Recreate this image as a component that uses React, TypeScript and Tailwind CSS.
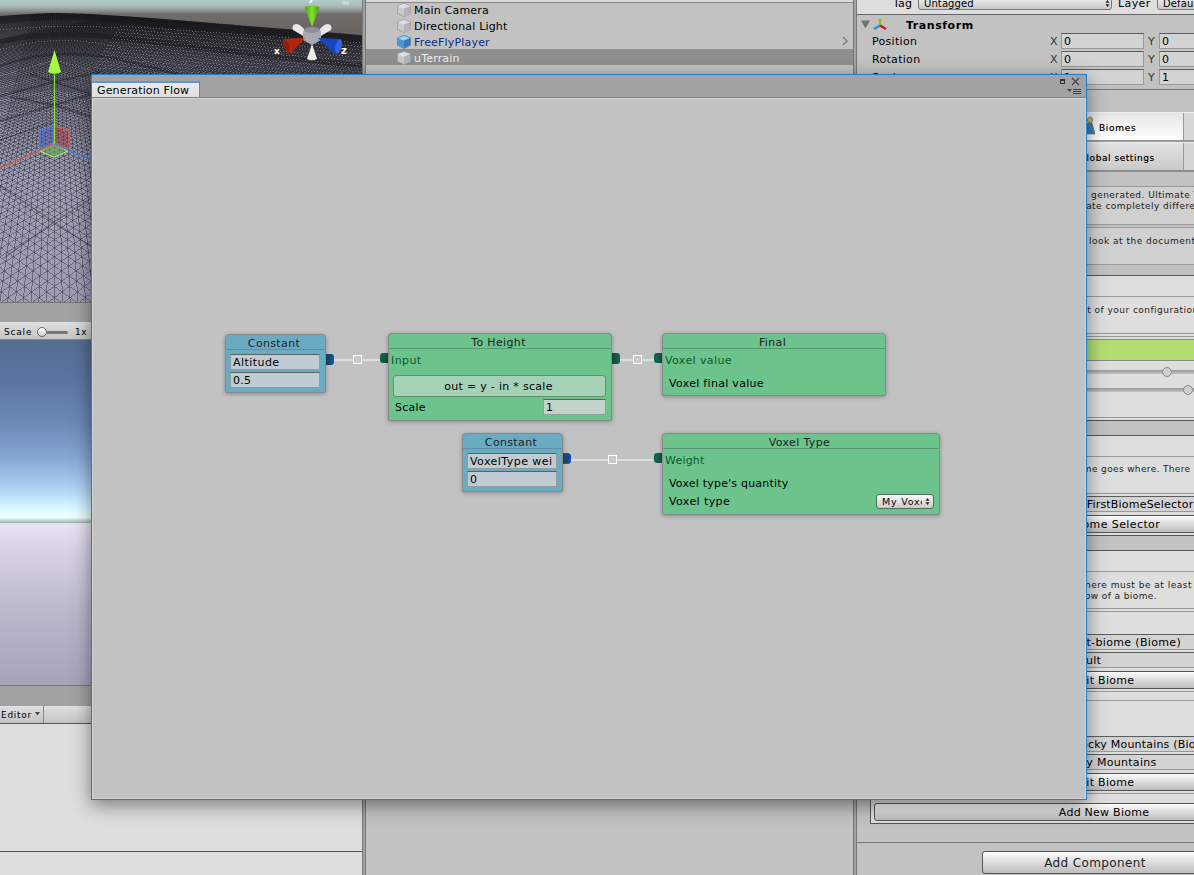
import React from "react";

const range = (a: number, b: number) => Array.from({ length: b - a + 1 }, (_, i) => a + i);

/* Straight mesh edges fanning out from a vanishing point above the view. */
function fan(vx: number, slope: number, from: number, to: number) {
  const horizon = -70;
  return range(from, to)
    .map((n) => {
      const x1 = vx + slope * n * (0 - horizon);
      const x2 = vx + slope * n * (304 - horizon);
      return `M${x1.toFixed(1)} 0L${x2.toFixed(1)} 304`;
    })
    .join("");
}

/* Rows of lit ridge facets that follow the fall of the hills to the right. */
const facets = range(0, 13)
  .map((i) => `M${120 - i * 2} ${26 + i * 3.2}L362 ${43 + i * 3.6}`)
  .join("");

function SceneView() {
  const edges = fan(54.5, 0.021, -12, 160) + fan(-439.5, 0.042, 18, 180) + fan(548.5, 0.042, -120, -1);
  return (
    <svg width="362" height="302" viewBox="0 0 362 302" className="block shrink-0">
      <defs>
        <linearGradient id="haze" x1="0" y1="0" x2="0" y2="1">
          <stop offset="0" stopColor="#b5cccc" />
          <stop offset="0.2" stopColor="#a8b8b8" />
          <stop offset="0.42" stopColor="#6f6c6a" />
          <stop offset="1" stopColor="#6a6360" />
        </linearGradient>
        <linearGradient id="depth" x1="0" y1="12" x2="0" y2="180" gradientUnits="userSpaceOnUse">
          <stop offset="0" stopColor="#0c0c0e" stopOpacity="0.72" />
          <stop offset="0.3" stopColor="#18181c" stopOpacity="0.34" />
          <stop offset="0.65" stopColor="#1a1a1e" stopOpacity="0.14" />
          <stop offset="1" stopColor="#222228" stopOpacity="0" />
        </linearGradient>
        <linearGradient id="coneY" x1="0" y1="0" x2="1" y2="0">
          <stop offset="0" stopColor="#4a9c10" />
          <stop offset="0.5" stopColor="#83e02c" />
          <stop offset="1" stopColor="#4c9413" />
        </linearGradient>
        <clipPath id="ground">
          <path d="M0 16L30 14L55 13L90 14L150 18L200 22L260 27L310 31L362 35V302H0Z" />
        </clipPath>
      </defs>
      <rect width="362" height="34" fill="url(#haze)" />
      <rect y="30" width="362" height="20" fill="#6a6360" />
      <g clipPath="url(#ground)">
        <rect width="362" height="302" fill="#9d9db5" />
        <path d={edges} stroke="#25252c" strokeWidth="0.7" strokeOpacity="0.6" fill="none" shapeRendering="crispEdges" />
        <rect width="362" height="180" fill="url(#depth)" />
        <g fill="none" stroke="#101014" strokeOpacity="0.35" strokeWidth="2">
          <path d="M0 20Q60 12 130 20T362 40" strokeWidth="8" />
          <path d="M0 42Q50 30 120 38T250 54L362 66" strokeWidth="5" />
          <path d="M0 66Q60 44 130 62T200 80" strokeWidth="2.500" />
          <path d="M0 96L54 82L100 72M30 74L100 97M0 121L54 105L100 92M10 97L54 105L92 117" />
          <path d="M0 186L54 222L92 247M92 198L54 222L4 258M0 140L54 122" strokeWidth="1.200" />
        </g>
        <g stroke="#b4b4c6" strokeOpacity="0.45" fill="none" strokeDasharray="1 2" shapeRendering="crispEdges">
          <path d={facets} />
          <path d="M0 30Q55 24 120 28M0 50Q60 32 120 48M0 76L54 60L92 70M0 88L54 73L92 80M0 101L54 90L92 104M0 108L54 97L92 110M0 114L54 112L92 124" />
        </g>
      </g>
      <path d="M40 131L54 126V144L40 149Z" fill="#3c5ad0" fillOpacity="0.4" stroke="#4a7ce6" />
      <path d="M54 126L69 131V149L54 144Z" fill="#b03038" fillOpacity="0.4" stroke="#ea5a48" />
      <path d="M54 144L68 151L54 157L40 151Z" fill="#6fb34e" fillOpacity="0.55" stroke="#a5f27b" />
      <path d="M54 144L0 168" stroke="#db5a3c" strokeWidth="1.300" />
      <path d="M54 144L92 160" stroke="#3f82e8" strokeWidth="1.300" />
      <path d="M54.500 72V144" stroke="#8fe03a" />
      <path d="M54.500 50L48 72Q54.500 75 61 72Z" fill="#a6fb43" />
      <g>
        <path d="M305 37L293 30Q291 25 296 24Q301 24 307 33ZM319 37L331 30Q333 25 328 24Q323 24 317 33Z" fill="#e8e8e8" />
        <path d="M303 31L312 27L321 31V40L312 45L303 40Z" fill="#a9aab1" />
        <ellipse cx="312" cy="30" rx="8" ry="3" fill="#8d909b" />
        <path d="M312 27L304.500 7Q312 4 319.500 7Z" fill="url(#coneY)" />
        <path d="M312 44L307 59Q312 61.500 317 59Z" fill="#ededed" />
        <path d="M305 38L284 39Q281 45 288 53L291 53Z" fill="#b5240f" />
        <path d="M284 40Q291 43 289 53Q282 50 284 40Z" fill="#8f1c0c" />
        <path d="M318 38L341 39Q344 46 337 54L333 53Z" fill="#1846bd" />
        <ellipse cx="338.500" cy="46.500" rx="3" ry="7" transform="rotate(15 338.5 46.5)" fill="#2f66e8" />
        <path d="M342 1h7v4h-7z" fill="#c7d3d3" />
      </g>
      <g fill="#fff" fontFamily="DejaVu Sans" fontSize="10" fontWeight="bold">
        <text x="274" y="54" fontSize="9">x</text>
        <text x="341" y="54">z</text>
        <text x="308" y="1">y</text>
      </g>
    </svg>
  );
}

function CubeIcon({ blue }: { blue?: boolean }) {
  return (
    <svg width="14" height="14" viewBox="0 0 14 14" className="mt-0.5 shrink-0">
      <path d="M7 .5L13.500 2.800V10.300L7 13.500L.5 10.300V2.800Z" fill={blue ? "#4b97d5" : "#cbcbcb"} stroke={blue ? "#5286b0" : "#9c9c9c"} strokeWidth="0.8" />
      <path d="M7 1L13 3L7 5.800L1 3Z" fill={blue ? "#9fd3f7" : "#dedede"} />
      <path d="M7 5.800L13 3.200V10L7 13Z" fill={blue ? "#3b78b8" : "#b4b4b4"} />
    </svg>
  );
}

function HierarchyRow({ name, className = "", blue, arrow }: { name: string; className?: string; blue?: boolean; arrow?: boolean }) {
  return (
    <div className={`flex h-4 shrink-0 items-center gap-[3px] pl-[31px] pr-1 ${className}`}>
      <CubeIcon blue={blue} />
      <span className="grow pt-1 tracking-[0.18px]">{name}</span>
      {arrow && (
        <svg width="8" height="10" viewBox="0 0 8 10">
          <path d="M2 1L6 5L2 9" fill="none" stroke="#777" strokeWidth="1.300" />
        </svg>
      )}
    </div>
  );
}

function UpDown() {
  return (
    <svg width="5" height="7" viewBox="0 0 5 7" className="shrink-0">
      <path d="M2.500 0L4.500 2.800H.5ZM2.500 7L4.500 4.200H.5Z" fill="#222" />
    </svg>
  );
}

function Field({ children, className = "" }: { children: React.ReactNode; className?: string }) {
  return (
    <div className={`flex h-4 shrink-0 items-center overflow-hidden whitespace-nowrap border border-[#999] border-t-[#5c5c5c] bg-[#d3d3d3] pt-px leading-[13px] ${className}`}>
      {children}
    </div>
  );
}

function VectorRow({ label, value }: { label: string; value: string }) {
  return (
    <div className="flex h-[18px] w-[420px] shrink-0 items-start pl-[15px]">
      <span className="w-[178px] shrink-0 pt-0.5 tracking-[0.3px]">{label}</span>
      <span className="w-[11px] shrink-0 pt-0.5 text-[#333]">X</span>
      <Field className="w-[83px] pl-0.5">{value}</Field>
      <span className="w-[15px] shrink-0 pl-1 pt-0.5 text-[#333]">Y</span>
      <Field className="w-[83px] pl-0.5">{value}</Field>
    </div>
  );
}

function WideButton({ children, className = "" }: { children: React.ReactNode; className?: string }) {
  return (
    <div className={`flex h-[18px] shrink-0 items-center whitespace-nowrap rounded-[3px] border border-[#555] bg-gradient-to-b from-[#fcfcfc] to-[#bdbdbd] pt-0.5 ${className}`}>
      {children}
    </div>
  );
}

function Inspector() {
  return (
    <div className="flex w-[337px] shrink-0 flex-col overflow-hidden bg-[#c2c2c2]">
      <div className="flex h-[15px] w-[420px] shrink-0 items-start border-b border-[#666] bg-[#dedede] pl-9">
        <span className="-mt-[3px] w-[25px] shrink-0 tracking-[0.2px]">Tag</span>
        <div className="-mt-[5px] flex h-[15px] w-[194px] shrink-0 items-center rounded-[3px] border border-[#777] bg-gradient-to-b from-[#f5f5f5] to-[#c8c8c8] pl-[5px] pr-px pt-0.5 text-[10px]">
          <span className="grow tracking-[0.1px]">Untagged</span>
          <UpDown />
        </div>
        <span className="-mt-[3px] w-[45px] shrink-0 pl-1.5 tracking-[0.4px]">Layer</span>
        <div className="-mt-[5px] flex h-[15px] w-[80px] shrink-0 items-center rounded-[3px] border border-[#777] bg-gradient-to-b from-[#f5f5f5] to-[#c8c8c8] pl-[5px] pt-0.5 text-[10px] tracking-[0.1px]">Default</div>
      </div>
      <div className="flex h-[18px] shrink-0 items-center pl-1 pt-px">
        <svg width="10" height="9" viewBox="0 0 10 9">
          <path d="M0 .5H9L4.500 8.500Z" fill="#717171" />
        </svg>
        <svg width="15" height="14" viewBox="0 0 15 14" className="ml-px">
          <g fill="none" strokeWidth="2.400">
            <path d="M8 7.500V1" stroke="#7ec413" />
            <path d="M8 7.500L2 11" stroke="#2a90cc" />
            <path d="M8 7.500L14 11" stroke="#d41417" />
          </g>
        </svg>
        <span className="ml-[19px] pt-[3px] font-bold tracking-[0.55px]">Transform</span>
      </div>
      <VectorRow label="Position" value="0" />
      <VectorRow label="Rotation" value="0" />
      <VectorRow label="Scale" value="1" />
      <div className="h-[3px] shrink-0 border-b border-[#777]" />
      <div className="h-[22px] shrink-0" />

      <div className="flex h-[30px] shrink-0 border-b-2 border-t border-b-[#999] border-t-[#eee] text-[9px]">
        <div className="flex w-[327px] items-center gap-[4px] border-r border-[#999] bg-gradient-to-b from-[#e6e6e6] to-white pl-[224px]">
          <svg width="14" height="20" viewBox="0 0 14 20" className="-mt-0.5 shrink-0">
            <path d="M6 7H11L14 18H5Z" fill="#3f7ca8" stroke="#777" strokeWidth="0.800" />
            <circle cx="9" cy="4" r="2.800" fill="#cdb44e" stroke="#777" strokeWidth="0.800" />
          </svg>
          <span className="pt-0.5 tracking-[0.7px] [text-shadow:0_0_0.5px_#0008]">Biomes</span>
        </div>
        <div className="grow bg-[#d8d8d8]" />
      </div>
      <div className="flex h-[30px] shrink-0 border-b-2 border-t border-b-[#8d8d8d] border-t-[#eee] text-[9px]">
        <div className="flex w-[327px] items-center border-r border-[#999] bg-gradient-to-b from-[#e2e2e2] to-[#cacaca] pl-[222px]">
          <span className="whitespace-nowrap pt-0.5 tracking-[0.55px] [text-shadow:0_0_0.5px_#0008]">Global settings</span>
        </div>
        <div className="grow bg-[#d6d6d6]" />
      </div>
      <div className="h-[14px] shrink-0" />

      <div className="flex w-[477px] shrink-0 flex-col text-[9px] leading-[11px] text-[#222]">
        <div className="flex h-[39px] flex-col border-y border-[#999] bg-[#d0d0d0] pl-[234px] pt-[3px] tracking-[0.45px]">
          <span>generated. Ultimate Terrains</span>
          <span className="-ml-[9px]">rate completely different</span>
        </div>
        <div className="mt-0.5 h-[38px] border-y border-[#999] bg-[#d0d0d0] pl-[232px] pt-[8px] tracking-[0.5px]">look at the documentation</div>
      </div>
      <div className="h-2.5 shrink-0" />

      <div className="ml-[13px] flex h-[146px] w-[470px] shrink-0 flex-col border border-[#555] bg-[#dedede]">
        <div className="h-5 shrink-0" />
        <div className="h-[38px] shrink-0 border-y border-[#999] pl-[210px] pt-2 text-[9px] leading-[11px] tracking-[0.47px] text-[#222]">ut of your configuration</div>
        <div className="mt-0.5 h-[82px] shrink-0 border-y border-[#999] pt-[2px]">
          <div className="h-[22px] border-y border-[#888] bg-[#b3dd70]" />
          <div className="flex h-[18px] items-center pt-[3px]">
            <div className="h-1 w-[292px] bg-gradient-to-b from-[#999] to-[#c4c4c4]" />
            <div className="-ml-px size-2.5 shrink-0 rounded-full border border-[#888] bg-[#cfcfcf]" />
            <div className="h-1 grow bg-gradient-to-b from-[#999] to-[#c4c4c4]" />
          </div>
          <div className="flex h-[18px] items-center pt-[3px]">
            <div className="h-1 w-[313px] bg-gradient-to-b from-[#999] to-[#c4c4c4]" />
            <div className="-ml-px size-2.5 shrink-0 rounded-full border border-[#888] bg-[#cfcfcf]" />
            <div className="h-1 grow bg-gradient-to-b from-[#999] to-[#c4c4c4]" />
          </div>
        </div>
      </div>
      <div className="h-3.5 shrink-0" />

      <div className="ml-[13px] flex h-[101px] w-[470px] shrink-0 flex-col border border-[#555] bg-[#dedede]">
        <div className="h-5 shrink-0" />
        <div className="h-[38px] shrink-0 border-y border-[#999] pl-[206px] pt-[7px] text-[9px] leading-[11px] tracking-[0.35px] text-[#222]">ome goes where. There</div>
        <div className="flex flex-col gap-[3px] px-[3px] pt-0.5">
          <Field className="pl-[205px] tracking-[0.2px]">yFirstBiomeSelector (BiomeSelector)</Field>
          <WideButton className="pl-[204px] tracking-[0.4px]">iome Selector</WideButton>
        </div>
      </div>
      <div className="h-3.5 shrink-0" />

      <div className="ml-[13px] flex h-[274px] w-[470px] shrink-0 flex-col border border-[#555] bg-[#dedede]">
        <div className="h-5 shrink-0" />
        <div className="flex h-[38px] shrink-0 flex-col border-y border-[#999] pl-[210px] pt-2 text-[9px] leading-[11px] tracking-[0.4px] text-[#222]">
          <span className="tracking-[0.5px]">there must be at least one</span>
          <span>row of a biome.</span>
        </div>
        <div className="mt-0.5 flex h-[81px] shrink-0 flex-col gap-0.5 border-y border-[#999] px-[3px] pt-[22px]">
          <Field className="pl-[208px] tracking-[0.35px]">lt-biome (Biome)</Field>
          <Field className="pl-[200px] tracking-[0.2px]">fault</Field>
          <WideButton className="mt-px pl-[204px] tracking-[0.3px]">dit Biome</WideButton>
        </div>
        <div className="mt-[8px] flex h-[94px] shrink-0 flex-col gap-0.5 border-y border-[#999] px-[3px] pt-[35px]">
          <Field className="pl-[206px] tracking-[0.2px]">ocky Mountains (Biome)</Field>
          <Field className="pl-[205px] tracking-[0.3px]">ky Mountains</Field>
          <WideButton className="mt-px pl-[204px] tracking-[0.3px]">dit Biome</WideButton>
        </div>
        <WideButton className="mx-[3px] mt-[9px] justify-center pr-0.5 tracking-[0.25px]">Add New Biome</WideButton>
      </div>
      <div className="h-[19px] shrink-0 border-b border-[#777]" />
      <div className="ml-[125px] mt-2 flex h-[23px] w-[226px] shrink-0 items-center justify-center rounded-[3px] border border-[#555] bg-gradient-to-b from-[#fcfcfc] to-[#bdbdbd] text-[12px] tracking-[0.38px] text-[#222]">Add Component</div>
    </div>
  );
}

function NodeField({ children, className = "" }: { children: React.ReactNode; className?: string }) {
  return (
    <div className={`flex h-4 shrink-0 items-center border border-[#949c9e] border-t-[#5c6264] px-0.5 pt-px leading-[13px] ${className}`}>
      <span className="overflow-hidden whitespace-nowrap">{children}</span>
    </div>
  );
}

function FlowNode({ title, className, line = "border-[#5c8fa3]", children }: { title: string; className: string; line?: string; children: React.ReactNode }) {
  return (
    <div className={`absolute flex flex-col rounded-t-[4px] rounded-b-[2px] border border-[#858b8b] shadow-[0_1px_4px_rgba(0,0,0,0.3)] ${className}`}>
      <div className={`flex h-[15px] shrink-0 items-center justify-center border-b pr-[3px] pt-[3px] text-[#222] tracking-[0.35px] ${line}`}>{title}</div>
      {children}
    </div>
  );
}

function ConstantNode({ name, value, className }: { name: string; value: string; className: string }) {
  return (
    <FlowNode title="Constant" className={`h-[59px] w-[101px] bg-[#6aabc2] ${className}`}>
      <div className="flex flex-col gap-0.5 pl-1 pt-1">
        <NodeField className="w-[90px] bg-[#c0ccd2] tracking-[0.45px]">{name}</NodeField>
        <NodeField className="w-[90px] bg-[#c0ccd2] tracking-[0.2px]">{value}</NodeField>
      </div>
    </FlowNode>
  );
}

function Link({ className, dot }: { className: string; dot?: boolean }) {
  return (
    <div className={`absolute flex h-[9px] items-center ${className}`}>
      <div className="h-0.5 grow bg-[#dedede]" />
      <div className="flex size-[9px] shrink-0 items-center justify-center border border-white bg-[#c9c9c9]">{dot && <div className="size-px bg-white" />}</div>
      <div className="h-0.5 grow bg-[#dedede]" />
    </div>
  );
}

function FlowWindow() {
  return (
    <div className="absolute left-[91px] top-[74px] flex h-[726px] w-[996px] flex-col border border-[#1c80d2] bg-[#c2c2c2] shadow-[0_5px_18px_rgba(0,0,0,0.45)]">
      <div className="flex h-[23px] shrink-0 items-end justify-between border-b border-[#828282] bg-[#a2a2a2]">
        <div className="flex h-4 w-[108px] items-center border-r border-t-2 border-r-[#808080] border-t-[#5b96df] bg-gradient-to-b from-[#ebebeb] to-[#dedede] pl-[5px] pt-px tracking-[0.15px]">Generation Flow</div>
        <svg width="34" height="22" viewBox="0 0 34 22">
          <path d="M8 4h5v5H8zM9 6v2h3v-2z" fill="#333" fillRule="evenodd" />
          <path d="M20 3L27 10M27 3L20 10" stroke="#444" strokeWidth="1.100" />
          <path d="M15 14h5l-2.500 3z" fill="#444" />
          <path d="M21 14.500h8M21 16.500h8M21 18.500h8" stroke="#444" />
        </svg>
      </div>
      <div className="relative grow border border-[#d2d2d2]">
        <Link className="left-[240px] top-[256px] w-[49px]" />
        <Link className="left-[527px] top-[256px] w-[35px]" dot />
        <Link className="left-[478px] top-[356px] w-[82px]" />

        <div className="absolute left-[232px] top-[255px] h-[11px] w-[9px] rounded-r-[3px] bg-gradient-to-r from-[#174a6b] from-55% to-[#1450e6]" />
        <div className="absolute left-[287px] top-[254px] h-2.5 w-[9px] rounded-l-[3px] bg-gradient-to-br from-[#17714e] to-[#0c4a31]" />
        <div className="absolute left-[518px] top-[254px] h-[11px] w-[9px] rounded-r-[3px] bg-gradient-to-r from-[#0d5233] to-[#176058]" />
        <div className="absolute left-[561px] top-[254px] h-2.5 w-[9px] rounded-l-[3px] bg-gradient-to-r from-[#15655b] to-[#0f5a38]" />
        <div className="absolute left-[469px] top-[354px] h-[11px] w-[9px] rounded-r-[3px] border border-[#1450e6] bg-[#1b4a72]" />
        <div className="absolute left-[561px] top-[354px] h-2.5 w-[9px] rounded-l-[3px] bg-gradient-to-r from-[#15655b] to-[#0f5a38]" />

        <ConstantNode name="Altitude" value="0.5" className="left-[132px] top-[235px]" />
        <ConstantNode name="VoxelType wei" value="0" className="left-[369px] top-[334px]" />

        <FlowNode title="To Height" line="border-[#589a74]" className="left-[295px] top-[234px] h-[88px] w-[224px] bg-[#6cc38c]">
          <span className="h-[26px] pl-0.5 pt-[5px] text-[#0a5a2c] tracking-[0.4px]">Input</span>
          <div className="ml-1 mr-[5px] flex h-[22px] items-center justify-center rounded-[3px] border border-[#5f8f70] bg-[#a5d1b6] pr-0.5 pt-px tracking-[0.3px]">out = y - in * scale</div>
          <div className="ml-1 mr-[5px] mt-0.5 flex items-center justify-between pl-0.5">
            <span className="pt-0.5 tracking-[0.25px]">Scale</span>
            <NodeField className="w-[63px] bg-[#c2d4c9]">1</NodeField>
          </div>
        </FlowNode>

        <FlowNode title="Final" line="border-[#589a74]" className="left-[569px] top-[234px] h-[63px] w-[224px] bg-[#6cc38c]">
          <span className="h-[26px] pl-0.5 pt-[5px] text-[#0a5a2c] tracking-[0.4px]">Voxel value</span>
          <span className="pl-1.5 pt-0.5 tracking-[0.3px]">Voxel final value</span>
        </FlowNode>

        <FlowNode title="Voxel Type" line="border-[#589a74]" className="left-[569px] top-[334px] h-[82px] w-[278px] bg-[#6cc38c]">
          <span className="h-[26px] pl-0.5 pt-[5px] text-[#0a5a2c] tracking-[0.2px]">Weight</span>
          <span className="h-[18px] pl-1.5 pt-0.5 tracking-[0.2px]">Voxel type's quantity</span>
          <div className="flex h-[16px] items-center justify-between pl-1.5 pr-[5px]">
            <span className="pt-0.5 tracking-[0.4px]">Voxel type</span>
            <div className="flex h-[15px] w-[58px] items-center justify-between rounded-[3px] border border-[#4f6f5b] bg-gradient-to-b from-[#fafafa] to-[#c9c9c9] pl-[5px] pr-[3px] pt-px text-[9.5px] tracking-[0.8px]">
              <span className="w-[40px] shrink-0 overflow-hidden whitespace-nowrap">My Voxel</span>
              <UpDown />
            </div>
          </div>
        </FlowNode>
      </div>
    </div>
  );
}

export default function App() {
  return (
    <div className="relative flex h-[875px] w-[1194px] overflow-hidden bg-[#a2a2a2] font-['DejaVu_Sans',sans-serif] text-[11px] leading-[14px] text-black">
      <div className="flex w-[362px] shrink-0 flex-col">
        <SceneView />
        <div className="h-[20px] shrink-0 border-t border-[#777] bg-[#a2a2a2]" />
        <div className="flex h-[18px] shrink-0 items-center border-b border-[#888] bg-gradient-to-b from-[#e0e0e0] to-[#c4c4c4] pl-1 pt-[3px] text-[9px]">
          <span className="w-[33px] tracking-[0.8px]">Scale</span>
          <div className="size-2.5 rounded-full border border-[#666] bg-gradient-to-b from-white to-[#ccc]" />
          <div className="h-[3px] w-[21px] rounded-r bg-[#777]" />
          <span className="pl-[7px] tracking-[0.6px]">1x</span>
        </div>
        <div className="h-[345px] shrink-0 bg-[linear-gradient(180deg,#566c91_0%,#5c75a0_12%,#6a89b6_24%,#84a7d3_34%,#aed2f3_43%,#c9eeff_47%,#e4ffff_50%,#edffff_51.500%,#9eb0b0_53%,#e9e4f4_53.200%,#d5d0e2_62%,#b9b6ca_80%,#a4a4bb_100%)]" />
        <div className="h-[21px] shrink-0 border-t border-[#777] bg-[#a2a2a2]" />
        <div className="flex h-[18px] shrink-0 border-b border-[#555] bg-gradient-to-b from-[#e0e0e0] to-[#c4c4c4] text-[9px]">
          <div className="flex w-11 items-center justify-between border-r border-[#888] pl-px pr-[3px] tracking-[0.7px]">
            Editor
            <svg width="5" height="4" viewBox="0 0 5 4" className="mb-0.5">
              <path d="M0 0H5L2.500 3.500Z" fill="#444" />
            </svg>
          </div>
        </div>
        <div className="h-[128px] shrink-0 border-b border-[#555] bg-[#dedede]" />
        <div className="grow bg-[#dedede]" />
      </div>

      <div className="w-1 shrink-0 border-x border-[#777] bg-[#a2a2a2]" />
      <div className="flex w-[487px] shrink-0 flex-col bg-[#c2c2c2]">
        <div className="h-[3px] shrink-0 border-b border-[#8a8a8a] bg-[#d8d8d8]" />
        <div className="-mt-0.5 flex flex-col">
          <HierarchyRow name="Main Camera" />
          <HierarchyRow name="Directional Light" />
          <HierarchyRow name="FreeFlyPlayer" blue arrow className="text-[#0a2b86]" />
          <HierarchyRow name="uTerrain" className="bg-[#8f8f8f] text-[#eee]" />
        </div>
      </div>
      <div className="w-1 shrink-0 border-x border-[#777] bg-[#a2a2a2]" />

      <Inspector />
      <FlowWindow />
    </div>
  );
}
